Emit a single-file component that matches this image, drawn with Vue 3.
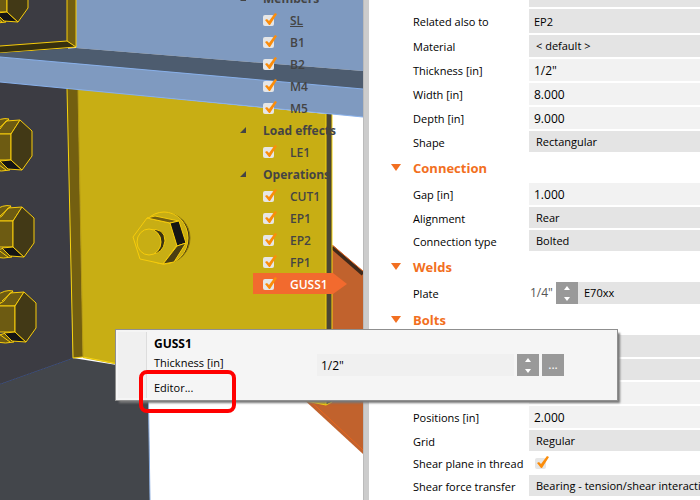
<template>
  <div class="app">
    <section class="viewport">
      <svg class="scene" viewBox="0 0 363 500" preserveAspectRatio="xMinYMin slice" aria-hidden="true">
        <defs>
          <g id="bolt" stroke="#f7cc0b" stroke-width="1" stroke-linejoin="round">
            <path d="M-8 124Q1 117 9 119L-2 134ZM-8 164L2 161L10 170Q2 172-8 170Z" fill="#6d5b12" />
            <path d="M-8 134L0 129L6 121L20 120L11 134Z" fill="#6d5b12" />
            <path d="M-8 134H11V160H-8Z" fill="#6d5b12" />
            <path d="M0 161L11 160L22 170L8 169Z" fill="#141414" />
            <path d="M20 120L32 131V156L22 170L11 160V134Z" fill="#423916" />
            <path d="M-2 129L9 119M-5 162L6 170" fill="none" />
          </g>
        </defs>

        <!-- gusset plate behind the web -->
        <path d="M332 246L363 273V454L300 396Z" fill="#c1622d" />
        <path d="M332 247L363 274" stroke="#40291a" stroke-width="4" />
        <path d="M332 245L363 271M306 397L363 450" stroke="#e8651e" fill="none" />

        <!-- lower column -->
        <path d="M0 384L73 358L148 370L150 500H0Z" fill="#43464b" />
        <path d="M148 370L150 500" stroke="#86a9dc" stroke-width="1" />
        <path d="M0 384L73 358" stroke="#304a8d" stroke-width="1" />

        <!-- end plate -->
        <path d="M0 0H68V88L73 358L0 384Z" fill="#3c3c43" />
        <path d="M76 0H363V71L76 48Z" fill="#7f9ac0" />
        <path d="M67 0H76V47L67 41Z" fill="#735f10" />
        <path d="M0 46L67 41L76 47L0 53Z" fill="#37300f" />
        <path d="M67 0V41L0 46M76 0V47L0 53M67 41L76 47" fill="none" stroke="#f7cc0b" />
        <use href="#bolt" x="-4" y="-148" />

        <!-- web -->
        <path d="M78 89L326 114L327 405L83 358Z" fill="#c8ae14" />
        <path d="M67 88L78 89L83 357L73 358Z" fill="#735f10" />
        <path d="M326 113L332 114V402L326 405Z" fill="#4b4634" />
        <path d="M326 113V405M332 114V402L326 405L83 357L73 358L67 88" fill="none" stroke="#f7d410" />
        <path d="M78 89L83 357" stroke="#b59a10" />

        <!-- beam flange -->
        <path d="M0 53L76 48L363 71V90L0 57Z" fill="#4d5c6f" />
        <path d="M0 57L363 89V117L0 82Z" fill="#7f9ac0" />
        <path d="M0 57L363 89M0 82L363 117" stroke="#88b0ea" fill="none" />

        <use href="#bolt" />
        <use href="#bolt" x="2" y="87" />
        <use href="#bolt" x="4" y="172" />

        <!-- nut with washer -->
        <g stroke="#f7cc0b" stroke-linejoin="round">
          <ellipse cx="166" cy="238" rx="24" ry="25" fill="#3a3211" stroke="#8a7510" />
          <ellipse cx="164" cy="238" rx="24" ry="26" fill="#c8ae14" />
          <path d="M133 237L147 218L170 223L177 245L163 264L140 259Z" fill="#c8ae14" />
          <path d="M147 218L155 216L179 221L170 223Z" fill="#735f10" />
          <path d="M170 223L179 221L186 243L177 246Z" fill="#171614" />
          <path d="M177 246L186 243L174 262L163 264Z" fill="#4a3f12" />
          <path d="M149 230Q165 227 165 241Q163 254 152 254Z" fill="#3a3211" />
          <ellipse cx="149" cy="242" rx="12" ry="13" fill="#c8ae14" />
        </g>
      </svg>

      <nav class="tree">
        <div v-for="group in tree" :key="group.name">
          <div class="tree-row group">
            <svg class="caret" viewBox="0 0 6 6"><path d="M6 0V6H0Z" fill="#444" /></svg>
            <span class="tree-name">{{ group.name }}</span>
          </div>
          <label
            v-for="item in group.items"
            :key="item.name"
            class="tree-row item"
            :class="{ selected: item.name === selected, current: item.name === 'SL' }"
          >
            <span class="check">
              <input v-model="item.on" type="checkbox" />
              <svg v-if="item.on" viewBox="0 0 14 13"><path d="M2 7L4 6L6 8L12 0L14 1L7 12L6 12Z" /></svg>
            </span>
            <span class="tree-name">{{ item.name }}</span>
          </label>
        </div>
      </nav>
    </section>

    <div class="splitter"></div>

    <section class="properties">
      <template v-for="(row, i) in rows" :key="i">
        <h2 v-if="row.type === 'heading'" class="heading">
          <svg class="marker" viewBox="0 0 10 7"><path d="M0 0H10L5 7Z" fill="#f26f21" /></svg>
          {{ row.label }}
        </h2>
        <div v-else class="prop" :class="row.type">
          <label v-if="row.label" class="prop-label" :for="'prop' + i">{{ row.label }}</label>
          <span v-else class="prop-label"></span>

          <select v-if="row.type === 'select' || row.type === 'material'" :id="'prop' + i" class="field">
            <option>{{ row.value }}</option>
          </select>
          <span v-else-if="row.type === 'check-row'" class="check">
            <input :id="'prop' + i" v-model="row.on" type="checkbox" />
            <svg v-if="row.on" viewBox="0 0 14 13"><path d="M2 7L4 6L6 8L12 0L14 1L7 12L6 12Z" /></svg>
          </span>
          <div v-else-if="row.type === 'weld'" class="weld-fields">
            <input :id="'prop' + i" v-model="row.value" class="weld-size" type="text" />
            <span class="spinner">
              <button type="button" aria-label="▲"><svg viewBox="0 0 6 4"><path d="M0 4H6L3 0Z" /></svg></button>
              <button type="button" aria-label="▼"><svg viewBox="0 0 6 4"><path d="M0 0H6L3 4Z" /></svg></button>
            </span>
            <select class="field electrode" :aria-label="row.label">
              <option>{{ row.electrode }}</option>
            </select>
          </div>
          <input v-else-if="row.label" :id="'prop' + i" v-model="row.value" class="field" type="text" />
          <div v-else class="field"></div>
        </div>
      </template>
    </section>

    <div class="popup">
      <div class="gutter"></div>
      <div class="popup-body">
        <strong class="popup-title">GUSS1</strong>
        <div class="popup-row">
          <label for="thickness">Thickness [in]</label>
          <input id="thickness" v-model="thickness" type="text" />
          <span class="spinner">
            <button type="button" aria-label="▲"><svg viewBox="0 0 6 4"><path d="M0 4H6L3 0Z" /></svg></button>
            <button type="button" aria-label="▼"><svg viewBox="0 0 6 4"><path d="M0 0H6L3 4Z" /></svg></button>
          </span>
          <button type="button" class="more">...</button>
        </div>
        <button type="button" class="editor">Editor...</button>
      </div>
      <div class="highlight"></div>
    </div>
  </div>
</template>

<script setup>
import { ref } from 'vue'

const selected = ref('GUSS1')
const thickness = ref('1/2"')

const makeItems = (names) => names.map((name) => ({ name, on: true }))

const tree = ref([
  { name: 'Members', items: makeItems(['SL', 'B1', 'B2', 'M4', 'M5']) },
  { name: 'Load effects', items: makeItems(['LE1']) },
  { name: 'Operations', items: makeItems(['CUT1', 'EP1', 'EP2', 'FP1', 'GUSS1']) }
])

const rows = ref([
  { type: 'dark' },
  { type: 'related', label: 'Related also to', value: 'EP2' },
  { type: 'material', label: 'Material', value: '< default >' },
  { type: 'text', label: 'Thickness [in]', value: '1/2"' },
  { type: 'text', label: 'Width [in]', value: '8.000' },
  { type: 'text', label: 'Depth [in]', value: '9.000' },
  { type: 'select', label: 'Shape', value: 'Rectangular' },
  { type: 'heading', label: 'Connection' },
  { type: 'text', label: 'Gap [in]', value: '1.000' },
  { type: 'select', label: 'Alignment', value: 'Rear' },
  { type: 'select', label: 'Connection type', value: 'Bolted' },
  { type: 'heading', label: 'Welds' },
  { type: 'weld', label: 'Plate', value: '1/4"', electrode: 'E70xx' },
  { type: 'heading', label: 'Bolts' },
  { type: 'dark' },
  { type: 'dark short' },
  { type: 'text' },
  { type: 'text', label: 'Positions [in]', value: '2.000' },
  { type: 'select', label: 'Grid', value: 'Regular' },
  { type: 'check-row', label: 'Shear plane in thread', on: true },
  { type: 'select', label: 'Shear force transfer', value: 'Bearing - tension/shear interaction' }
])
</script>

<style>
body {
  background: #fff;
  overflow: hidden;
}
</style>

<style scoped>
.app {
  position: relative;
  display: grid;
  grid-template-columns: minmax(0, 363fr) 6px minmax(0, 331fr);
  height: 100vh;
  overflow: hidden;
  font-family: "Open Sans", "Noto Sans", sans-serif;
  font-size: 12px;
  line-height: 16px;
  color: #000;
}
input,
select,
button {
  box-sizing: border-box;
  margin: 0;
  padding: 0;
  border: 0;
  border-radius: 0;
  background: none;
  font: inherit;
  color: inherit;
  appearance: none;
}
.viewport {
  position: relative;
  overflow: hidden;
}
.scene {
  position: absolute;
  inset: 0;
  width: 100%;
  height: 100%;
}
.tree {
  position: relative;
  width: 123px;
  margin: -13px 0 0 auto;
  color: #444;
  font-weight: 600;
}
.tree-row {
  display: flex;
  align-items: center;
  height: 22px;
  white-space: nowrap;
}
.tree-name {
  padding-top: 2px;
}
.group {
  gap: 17px;
  font-weight: 700;
}
.caret {
  width: 6px;
  height: 6px;
}
.item {
  gap: 16px;
  margin-left: 13px;
  padding-left: 10px;
}
.current .tree-name {
  text-decoration: underline;
}
.selected {
  width: 84px;
  background: #f26a2e;
  clip-path: polygon(0 0, 80px 0, 94px 11px, 80px 21px, 0 21px);
  color: #fff;
}
.check {
  position: relative;
  display: block;
  width: 11px;
  height: 11px;
}
.check input {
  display: block;
  width: 11px;
  height: 11px;
  border-radius: 2px;
  background: #e6e6e6;
}
.check svg {
  position: absolute;
  left: 0;
  top: -2px;
  width: 14px;
  height: 13px;
  fill: #fb8c0a;
  pointer-events: none;
}
.splitter {
  background: #ccc;
  border-left: 1px solid #bbb;
  box-sizing: border-box;
}
.properties {
  margin-top: -15px;
  background: #fff;
  overflow: hidden;
}
.heading {
  display: flex;
  align-items: center;
  gap: 12px;
  box-sizing: border-box;
  height: 29px;
  margin: 0;
  padding: 0 0 2px 22px;
  font-size: 13px;
  font-weight: 700;
  color: #f26f21;
}
.marker {
  width: 10px;
  height: 7px;
}
.prop {
  display: grid;
  grid-template-columns: 116px minmax(0, 1fr);
  align-items: center;
  box-sizing: border-box;
  height: 24px;
  padding: 0 0 2px 44px;
}
.prop-label {
  padding-top: 2px;
  font-size: 11px;
  white-space: nowrap;
}
.field {
  width: 100%;
  height: 100%;
  padding-left: 5px;
  background: #f2f2f2;
}
select.field,
.related .field {
  font-size: 11px;
}
.related {
  height: 26px;
}
.select,
.short {
  height: 23px;
}
.check-row {
  height: 22px;
}
.dark .field,
.related .field,
.select .field,
.material .field {
  background: #e4e4e4;
}
.select .field,
.material .field {
  padding-left: 7px;
}
.check-row .check {
  margin-left: 6px;
}
.weld-fields {
  display: flex;
  height: 22px;
}
.weld-size {
  width: 27px;
  padding-left: 1px;
  color: #555;
}
.electrode {
  flex: 1;
  min-width: 0;
  padding-left: 6px;
  background: #e4e4e4;
}
.spinner {
  display: flex;
  flex-direction: column;
  width: 22px;
  height: 22px;
  background: #999;
}
.spinner button {
  display: flex;
  align-items: center;
  justify-content: center;
  height: 11px;
}
.spinner svg {
  width: 6px;
  height: 4px;
  fill: #fff;
}
.popup {
  position: absolute;
  top: 329px;
  left: 115px;
  right: 82px;
  display: flex;
  box-sizing: border-box;
  height: 72px;
  padding: 2px;
  border: 1px solid #8f8f8f;
  background: #f5f5f5;
  box-shadow: 3px 3px 2px -1px #777;
}
.gutter {
  width: 28px;
  background: #f0f0f0;
  border-right: 1px solid #ddd;
}
.popup-body {
  display: flex;
  flex: 1;
  flex-direction: column;
  align-items: flex-start;
  padding: 4px 51px 0 7px;
}
.popup-row {
  display: grid;
  grid-template-columns: 160px 1fr 22px 22px;
  column-gap: 3px;
  align-self: stretch;
  height: 22px;
  margin-top: 2px;
}
.popup-row label {
  padding-top: 1px;
  font-size: 11px;
}
.popup-row input {
  min-width: 0;
  padding: 2px 0 0 4px;
  background: #f0f0f0;
}
.more {
  background: #999;
  color: #fff;
}
.editor {
  margin-top: 4px;
  font-size: 11px;
}
.highlight {
  position: absolute;
  left: 23px;
  top: 40px;
  box-sizing: border-box;
  width: 97px;
  height: 43px;
  border: 4px solid #f00;
  border-radius: 8px;
  pointer-events: none;
}
</style>
